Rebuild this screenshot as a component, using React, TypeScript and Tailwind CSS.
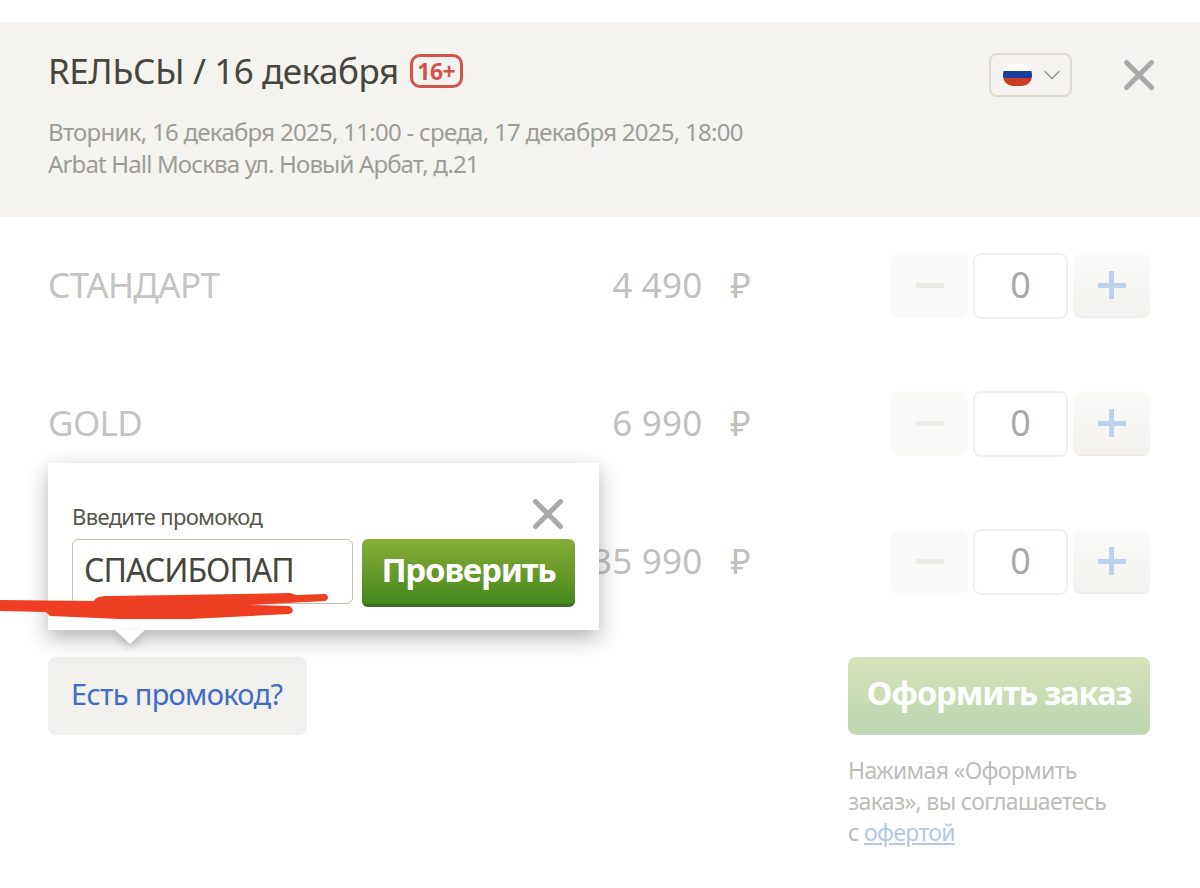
import { X, ChevronDown } from 'lucide-react'

const rows = [
  { name: 'СТАНДАРТ', price: '4 490' },
  { name: 'GOLD', price: '6 990' },
  // third label sits behind the promo popup
  { name: '', price: '35 990' },
]

function Stepper() {
  return (
    <div className="flex gap-[5px] items-center">
      <div className="w-[77px] h-[65px] rounded-lg bg-[#fafaf8] flex items-center justify-center">
        <div className="w-[28px] h-[5px] bg-[#edece7]" />
      </div>
      <div className="w-[95px] h-[66px] rounded-lg border-2 border-[#f1f0ec] bg-white flex items-center justify-center pb-[2px] text-[36px] text-[#a8a8a8]">
        0
      </div>
      <div className="w-[77px] h-[65px] rounded-lg bg-gradient-to-b from-[#fbfbf9] to-[#f3f2ee] border-b border-[#ebeae5] flex items-center justify-center relative">
        <div className="w-[28px] h-[5px] bg-[#bdd0ec]" />
        <div className="w-[5px] h-[28px] bg-[#bdd0ec] absolute" />
      </div>
    </div>
  )
}

export default function App() {
  return (
    <div
      className="w-[1200px] h-[888px] bg-white overflow-hidden relative pt-[22px]"
      style={{ fontFamily: '"Noto Sans", "Open Sans", sans-serif' }}
    >
      {/* Header */}
      <header className="h-[195px] bg-[#f4f3f0] pl-[48px] pr-[44px] pt-[27px] flex justify-between items-start">
        <div>
          <div className="flex items-center h-[44px]">
            <h1 className="text-[35px] leading-[44px] tracking-[-0.45px] text-[#46463c] font-normal">
              RЕЛЬСЫ / 16 декабря
            </h1>
            <span className="ml-[11px] w-[53px] h-[34px] rounded-[10px] border-[3px] border-[#d2544c] flex items-center justify-center text-[23px] font-bold tracking-[-0.5px] text-[#d2544c]">
              16+
            </span>
          </div>
          <div className="mt-[23px] text-[24px] leading-[32px] tracking-[-0.72px] text-[#9d9d98]">
            <p>Вторник, 16 декабря 2025, 11:00 - среда, 17 декабря 2025, 18:00</p>
            <p className="tracking-[-0.85px]">Arbat Hall Москва ул. Новый Арбат, д.21</p>
          </div>
        </div>
        <div className="flex items-start gap-[42px] pt-[4px]">
          <div className="w-[83px] h-[44px] rounded-lg border-2 border-[#dddbcf] flex items-center pl-[12px] gap-[6px]">
            <div className="w-[29px] h-[22px] rounded-[10px] overflow-hidden flex flex-col">
              <div className="h-[7px] bg-white" />
              <div className="h-[7px] bg-[#1c3f9e]" />
              <div className="h-[8px] bg-[#c83c28]" />
            </div>
            <ChevronDown size={28} strokeWidth={1.1} className="text-[#8f8f8b]" />
          </div>
          <X size={50} strokeWidth={2.4} className="text-[#a9a9a9] -mt-[3px] -mr-[8px]" />
        </div>
      </header>

      {/* Ticket rows */}
      <section className="pl-[48px] pr-[50px] pt-[36px] flex flex-col gap-[73px]">
        {rows.map(row => (
          <div key={row.price} className="flex items-center h-[65px]">
            <div className="w-[480px] text-[35px] tracking-[-0.6px] text-[#c4c4c2]">{row.name}</div>
            <div className="w-[223px] flex justify-end gap-[28px] text-[35px] tracking-[0.2px] text-[#c0c0be]">
              <span>{row.price}</span>
              <span>₽</span>
            </div>
            <div className="ml-auto">
              <Stepper />
            </div>
          </div>
        ))}
      </section>

      {/* Footer */}
      <footer className="pl-[48px] pr-[50px] mt-[63px] flex justify-between items-start">
        <div className="relative">
          <div className="w-[259px] h-[78px] rounded-lg bg-[#f1f0ec] flex items-center pl-[23px] pb-[4px] text-[29px] tracking-[-0.7px] text-[#3f6cc4]">
            Есть промокод?
          </div>

          {/* Promo popup */}
          <div className="absolute left-0 bottom-[105px] w-[551px] h-[167px] bg-white shadow-[0_8px_20px_rgba(0,0,0,0.3)] px-[24px] pt-[38px]">
            <div className="text-[22px] leading-[30px] tracking-[-0.65px] text-[#55554b]">Введите промокод</div>
            <X size={50} strokeWidth={2.4} className="absolute right-[26px] top-[26px] text-[#a9a9a9]" />
            <div className="flex gap-[9px] mt-[8px] items-start">
              <div className="w-[282px] h-[65px] rounded-md border border-[#c4c1ab] bg-white flex items-center pl-[11px] pb-[4px] text-[32px] tracking-[-1px] text-[#46463c]">
                СПАСИБОПАП
              </div>
              <div className="w-[214px] h-[68px] rounded-md bg-gradient-to-b from-[#88ad36] to-[#43881f] border-b-[3px] border-[#38701d] flex items-center justify-center pb-[4px] text-[33px] font-bold tracking-[-1.2px] text-white">
                Проверить
              </div>
            </div>
            <div className="absolute left-[67px] top-full w-0 h-0 border-l-[15px] border-r-[15px] border-t-[14px] border-l-transparent border-r-transparent border-t-white drop-shadow-[0_4px_4px_rgba(0,0,0,0.2)]" />
          </div>
        </div>

        <div className="w-[302px]">
          <div className="h-[78px] rounded-lg bg-gradient-to-b from-[#d8e2b9] to-[#bcd6ae] border-b-2 border-[#c9dbc0] flex items-center justify-center pb-[4px] text-[33px] font-bold tracking-[-1.2px] text-white">
            Оформить заказ
          </div>
          <p className="mt-[20px] text-[23px] leading-[31px] tracking-[-0.66px] text-[#bdbdb9]">
            Нажимая «Оформить
            <br />
            заказ», вы соглашаетесь
            <br />с <span className="text-[#b4c7e8] underline">офертой</span>
          </p>
        </div>
      </footer>

      {/* Red marker scribble drawn over the screenshot */}
      <svg className="absolute left-0 top-0 pointer-events-none" width="1200" height="888" viewBox="0 0 1200 888">
        <path
          d="M0 600 L94 601 C96 597 100 596 110 596 L240 594 L290 593 L296 595 L325 594 C329 595 329 600 325 601 L250 605 L289 606 C294 608 294 613 289 614 L190 619 L120 619 L50 616 L46 612 L0 611 Z"
          fill="#ee3f23"
        />
      </svg>
    </div>
  )
}
